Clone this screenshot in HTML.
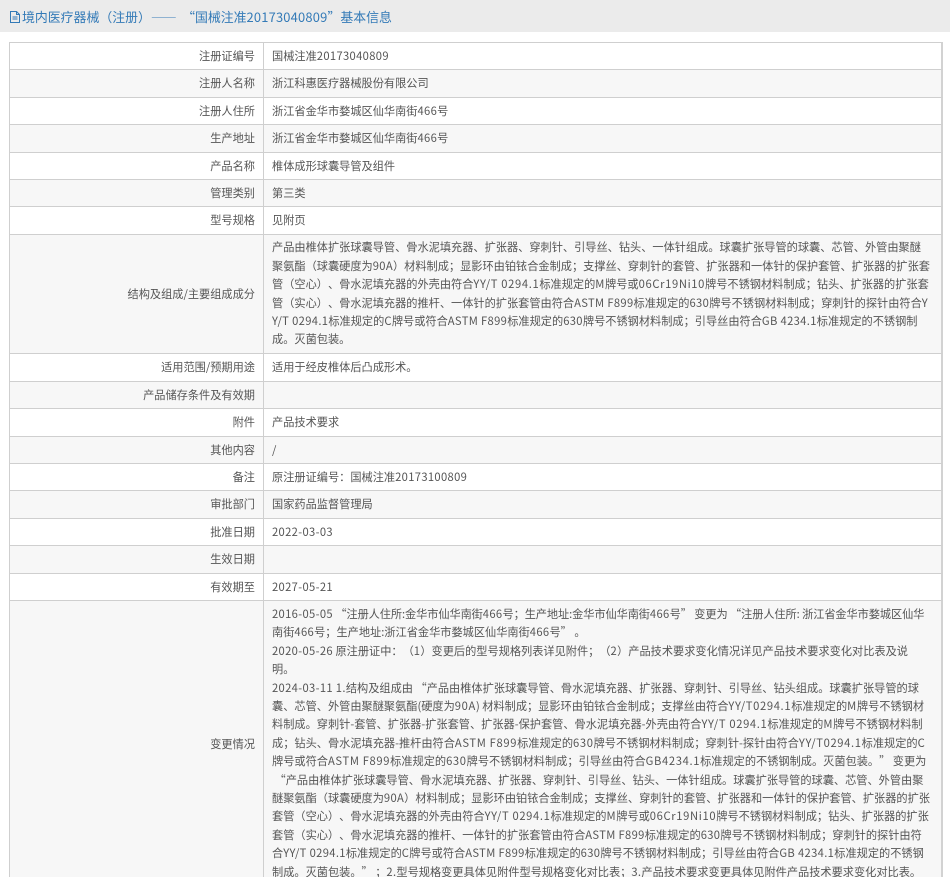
<!DOCTYPE html>
<html lang="zh-CN"><head><meta charset="utf-8"><title>基本信息</title>
<style>
html,body{margin:0;padding:0;width:950px;height:877px;overflow:hidden;background:#fff}
body{position:relative;font-family:"Noto Sans CJK SC",sans-serif;font-size:11.2px;color:#555;text-spacing-trim:space-all}
*{box-sizing:border-box}
i{font-style:normal;letter-spacing:.35px}
i.w{letter-spacing:.65px}
.hd{position:absolute;left:0;top:0;width:950px;height:32px;background:#ebebeb;color:#337ab7;font-size:12.9px;line-height:33px;padding-left:22px;white-space:nowrap}
.hd i{letter-spacing:.2px}
.hd svg{position:absolute;left:10px;top:11px}
.r{position:absolute;left:9px;width:934px;border:1px solid #cfcfcf;border-bottom:0;border-right:2px solid #d2d2d2;white-space:nowrap}
.r.g{background:#f7f7f7}
.l{position:absolute;left:0;top:0;bottom:0;width:254px;border-right:1px solid #cfcfcf;text-align:right;padding-right:8px;padding-bottom:2px;display:flex;align-items:center;justify-content:flex-end}
.v{position:absolute;left:262px;top:0;bottom:0;right:-10px;padding-bottom:2px;display:flex;align-items:center}
.m{line-height:18.4px}
</style></head><body>
<div class="hd"><svg width="10" height="12" viewBox="0 0 10 12" fill="none" stroke="#337ab7" stroke-width="1"><path d="M.5.5h6l3 3v8h-9zM6.5.5v3h3M2.5 6h5M2.5 8h5"/></svg>境内医疗器械（注册）<span style="letter-spacing:2.5px">——</span> “国械注准<i>20173040809</i>”基本信息</div>
<div class="r" style="top:42px;height:28px"><div class="l">注册证编号</div><div class="v"><span>国械注准<i>20173040809</i></span></div></div>
<div class="r g" style="top:69px;height:28px"><div class="l">注册人名称</div><div class="v">浙江科惠医疗器械股份有限公司</div></div>
<div class="r" style="top:97px;height:28px"><div class="l">注册人住所</div><div class="v"><span>浙江省金华市婺城区仙华南街<i>466</i>号</span></div></div>
<div class="r g" style="top:124px;height:28px"><div class="l">生产地址</div><div class="v"><span>浙江省金华市婺城区仙华南街<i>466</i>号</span></div></div>
<div class="r" style="top:152px;height:28px"><div class="l">产品名称</div><div class="v">椎体成形球囊导管及组件</div></div>
<div class="r g" style="top:179px;height:28px"><div class="l">管理类别</div><div class="v">第三类</div></div>
<div class="r" style="top:206px;height:28px"><div class="l">型号规格</div><div class="v">见附页</div></div>
<div class="r g" style="top:234px;height:120px"><div class="l">结构及组成/主要组成成分</div><div class="v m"><span>产品由椎体扩张球囊导管、骨水泥填充器、扩张器、穿刺针、引导丝、钻头、一体针组成。球囊扩张导管的球囊、芯管、外管由聚醚<br>聚氨酯（球囊硬度为<i>90A</i>）材料制成；显影环由铂铱合金制成；支撑丝、穿刺针的套管、扩张器和一体针的保护套管、扩张器的扩张套<br>管（空心）、骨水泥填充器的外壳由符合<i class="w">YY/T 0294.1</i>标准规定的<i class="w">M</i>牌号或<i class="w">06Cr19Ni10</i>牌号不锈钢材料制成；钻头、扩张器的扩张套<br>管（实心）、骨水泥填充器的推杆、一体针的扩张套管由符合<i>ASTM F899</i>标准规定的<i>630</i>牌号不锈钢材料制成；穿刺针的探针由符合<i>Y</i><br><i>Y/T 0294.1</i>标准规定的<i>C</i>牌号或符合<i>ASTM F899</i>标准规定的<i>630</i>牌号不锈钢材料制成；引导丝由符合<i>GB 4234.1</i>标准规定的不锈钢制<br>成。灭菌包装。</span></div></div>
<div class="r" style="top:353px;height:28px"><div class="l">适用范围/预期用途</div><div class="v">适用于经皮椎体后凸成形术。</div></div>
<div class="r g" style="top:381px;height:28px"><div class="l">产品储存条件及有效期</div><div class="v"></div></div>
<div class="r" style="top:408px;height:28px"><div class="l">附件</div><div class="v">产品技术要求</div></div>
<div class="r g" style="top:436px;height:28px"><div class="l">其他内容</div><div class="v">/</div></div>
<div class="r" style="top:463px;height:28px"><div class="l">备注</div><div class="v"><span>原注册证编号：国械注准<i>20173100809</i></span></div></div>
<div class="r g" style="top:490px;height:28px"><div class="l">审批部门</div><div class="v">国家药品监督管理局</div></div>
<div class="r" style="top:518px;height:28px"><div class="l">批准日期</div><div class="v"><i>2022-03-03</i></div></div>
<div class="r g" style="top:545px;height:28px"><div class="l">生效日期</div><div class="v"></div></div>
<div class="r" style="top:573px;height:28px"><div class="l">有效期至</div><div class="v"><i>2027-05-21</i></div></div>
<div class="r g" style="top:600px;height:288px"><div class="l">变更情况</div><div class="v m" style="display:block;padding-top:4px"><span style="letter-spacing:-.08px"><i>2016-05-05</i> “注册人住所:金华市仙华南街<i>466</i>号；生产地址:金华市仙华南街<i>466</i>号” 变更为 “注册人住所: 浙江省金华市婺城区仙华</span><br>南街<i>466</i>号；生产地址:浙江省金华市婺城区仙华南街<i>466</i>号” 。<br><i>2020-05-26</i> 原注册证中：（<i>1</i>）变更后的型号规格列表详见附件；（<i>2</i>）产品技术要求变化情况详见产品技术要求变化对比表及说<br>明。<br><i>2024-03-11 1.</i>结构及组成由 “产品由椎体扩张球囊导管、骨水泥填充器、扩张器、穿刺针、引导丝、钻头组成。球囊扩张导管的球<br>囊、芯管、外管由聚醚聚氨酯(硬度为<i class="w">90A</i>) 材料制成；显影环由铂铱合金制成；支撑丝由符合<i class="w">YY/T0294.1</i>标准规定的<i class="w">M</i>牌号不锈钢材<br>料制成。穿刺针-套管、扩张器-扩张套管、扩张器-保护套管、骨水泥填充器-外壳由符合<i class="w">YY/T 0294.1</i>标准规定的<i class="w">M</i>牌号不锈钢材料制<br>成；钻头、骨水泥填充器-推杆由符合<i class="w">ASTM F899</i>标准规定的<i class="w">630</i>牌号不锈钢材料制成；穿刺针-探针由符合<i class="w">YY/T0294.1</i>标准规定的<i class="w">C</i><br>牌号或符合<i class="w">ASTM F899</i>标准规定的<i class="w">630</i>牌号不锈钢材料制成；引导丝由符合<i class="w">GB4234.1</i>标准规定的不锈钢制成。灭菌包装。” 变更为<br>&nbsp;“产品由椎体扩张球囊导管、骨水泥填充器、扩张器、穿刺针、引导丝、钻头、一体针组成。球囊扩张导管的球囊、芯管、外管由聚<br>醚聚氨酯（球囊硬度为<i>90A</i>）材料制成；显影环由铂铱合金制成；支撑丝、穿刺针的套管、扩张器和一体针的保护套管、扩张器的扩张<br>套管（空心）、骨水泥填充器的外壳由符合<i class="w">YY/T 0294.1</i>标准规定的<i class="w">M</i>牌号或<i class="w">06Cr19Ni10</i>牌号不锈钢材料制成；钻头、扩张器的扩张<br>套管（实心）、骨水泥填充器的推杆、一体针的扩张套管由符合<i>ASTM F899</i>标准规定的<i>630</i>牌号不锈钢材料制成；穿刺针的探针由符<br>合<i>YY/T 0294.1</i>标准规定的<i>C</i>牌号或符合<i>ASTM F899</i>标准规定的<i>630</i>牌号不锈钢材料制成；引导丝由符合<i>GB 4234.1</i>标准规定的不锈钢<br>制成。灭菌包装。” ；<i>2.</i>型号规格变更具体见附件型号规格变化对比表；<i>3.</i>产品技术要求变更具体见附件产品技术要求变化对比表。</div></div>
</body></html>
